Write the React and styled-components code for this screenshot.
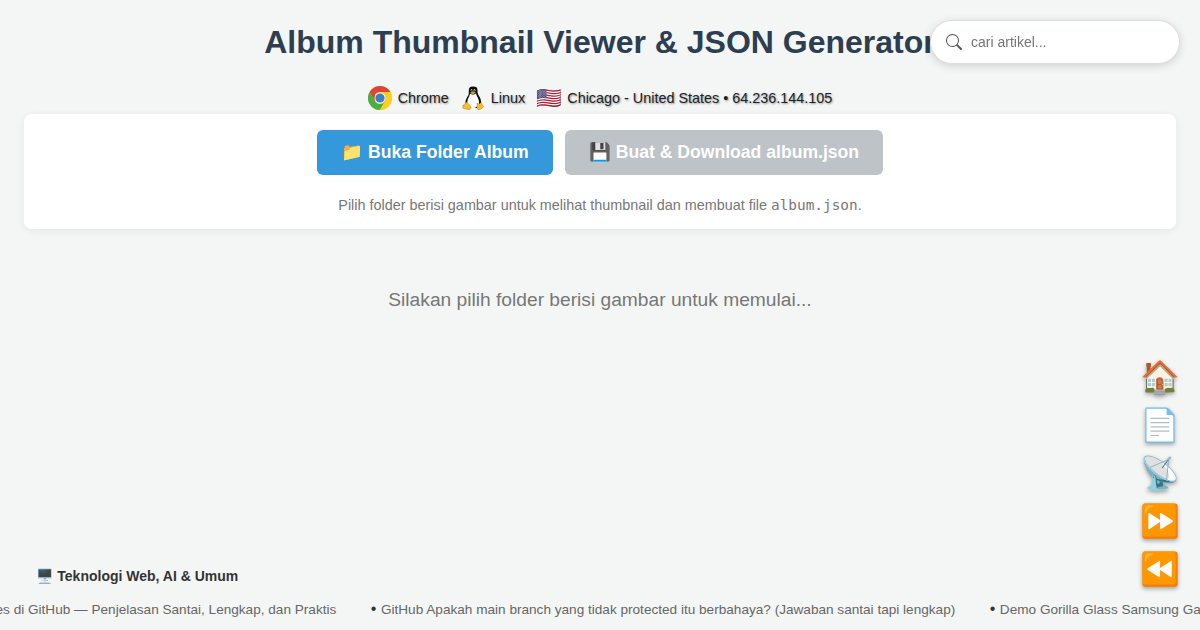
import React from 'react';
import styled, { createGlobalStyle } from 'styled-components';

const Global = createGlobalStyle`
  *, *::before, *::after { box-sizing: border-box; }
  body {
    margin: 0;
    background: #f4f6f6;
    color: #333;
    font-family: "Liberation Sans", "Noto Color Emoji", sans-serif;
    overflow: hidden;
  }
`;

const Page = styled.div`
  height: 630px;
  display: flex;
  flex-direction: column;
  padding-top: 24px;
  overflow: hidden;
`;

const Title = styled.h1`
  margin: 0;
  font-size: 32px;
  line-height: 36px;
  font-weight: 700;
  text-align: center;
  color: #2c3e50;
`;

const Visitor = styled.div`
  display: flex;
  justify-content: center;
  align-items: center;
  gap: 12px;
  height: 32px;
  margin-top: 22px;
  font-size: 14.4px;
  color: #222;
  text-shadow: 1px 1px 2px rgba(0, 0, 0, 0.4);
`;

const VisitorItem = styled.span`
  display: flex;
  align-items: center;
  gap: 6px;
  white-space: nowrap;
`;

const Flag = styled.span`
  font-size: 20.5px;
  line-height: 28px;
  width: 25px;
  margin-left: -1px;
  text-shadow: none;
`;

const Card = styled.section`
  margin: 0 24px;
  height: 115px;
  padding: 16px;
  background: #fff;
  border-radius: 8px;
  box-shadow: 0 2px 8px rgba(0, 0, 0, 0.06);
  text-align: center;
`;

const Actions = styled.div`
  display: flex;
  justify-content: center;
  gap: 12px;
`;

const Button = styled.button`
  width: ${(p) => p.$width}px;
  height: 45px;
  padding: 0;
  border: 0;
  border-radius: 6px;
  background: ${(p) => (p.$muted ? '#bdc3c7' : '#3498db')};
  color: #fff;
  font: 700 17.6px "Liberation Sans", "Noto Color Emoji", sans-serif;
  white-space: nowrap;
`;

const Hint = styled.p`
  margin: 21px 0 0;
  font-size: 14.4px;
  line-height: 18px;
  color: #777;

  code { font-family: "DejaVu Sans Mono", monospace; font-size: 14.4px; }
`;

const Empty = styled.p`
  margin: 60px 0 0;
  font-size: 19.2px;
  line-height: 22px;
  text-align: center;
  color: #777;
`;

const Footer = styled.footer`
  margin-top: auto;
  height: 64px;
`;

const Category = styled.div`
  padding-left: 36px;
  font-size: 14px;
  line-height: 20px;
  font-weight: 700;
`;

const Ticker = styled.div`
  display: flex;
  gap: 34.5px;
  margin: 15px 0 0 -4.5px;
  font-size: 13.6px;
  line-height: 18px;
  white-space: nowrap;
  color: #666;
`;

const TickerItem = styled.span`
  display: flex;
  align-items: center;
  gap: 4.5px;
`;

const Bullet = styled.span`
  position: relative;
  top: -1px;
  font-size: 16px;
  color: #333;
`;

const Search = styled.label`
  position: fixed;
  top: 20px;
  right: 20px;
  width: 250px;
  height: 44px;
  display: flex;
  align-items: center;
  gap: 9px;
  padding: 0 15px;
  border: 1px solid #ddd;
  border-radius: 22px;
  background: #fff;
  box-shadow: 0 2px 8px rgba(0, 0, 0, 0.15);

  svg { flex: none; }
`;

const Input = styled.input`
  flex: 1;
  min-width: 0;
  border: 0;
  outline: 0;
  padding: 0;
  background: transparent;
  font: 14px "Liberation Sans", sans-serif;

  &::placeholder { color: #757575; }
`;

const Dock = styled.nav`
  position: fixed;
  right: 20px;
  top: 353px;
  display: flex;
  flex-direction: column;
`;

const DockLink = styled.a`
  display: flex;
  justify-content: center;
  align-items: center;
  width: 40px;
  height: 48px;
  font-size: 32px;
  line-height: 37px;
  filter: drop-shadow(0 2px 2px rgba(0, 0, 0, 0.35));
`;

function ChromeLogo() {
  return (
    <svg width="24" height="24" viewBox="0 0 48 48">
      <circle cx="24" cy="24" r="24" fill="#fbd01c" />
      <path d="M24 24 13.6 30 3.2 12A24 24 0 0 1 44.8 12H24a12 12 0 0 0-10.4 6Z" fill="#dc4437" />
      <path d="M3.2 12A24 24 0 0 0 24 48L34.4 30A12 12 0 0 1 13.6 30Z" fill="#4aae48" />
      <path d="M44.8 12A24 24 0 0 1 24 48L34.4 30A12 12 0 0 0 34.4 18L24 12Z" fill="#fbd01c" />
      <circle cx="24" cy="24" r="11" fill="#f3f3f3" />
      <circle cx="24" cy="24" r="9.2" fill="#3d7fc0" />
    </svg>
  );
}

function TuxLogo() {
  return (
    <svg width="24" height="24" viewBox="0 0 48 48">
      <path d="M24 1c-6 0-8.5 3-8.5 8 0 6 .5 8-2.5 12-3 5-5 10-4 16l6 7h18l7-8c1-6-1-12-4-16-3-5-3-7-3-12 0-5-3-7-9-7Z" fill="#0b0b0b" />
      <path d="M18 15c3 3 8 3 12 0 1 5 6 10 6 17s-4 12-12 12-12-5-11.500-12c.5-7 5-12 5.500-17Z" fill="#fff" />
      <ellipse cx="21" cy="8.500" rx="1.8" ry="2.3" fill="#bbb" />
      <ellipse cx="27" cy="8.500" rx="2" ry="2.4" fill="#bbb" />
      <circle cx="21.4" cy="9" r="1" fill="#111" />
      <circle cx="26.6" cy="9" r="1" fill="#111" />
      <path d="m18.500 13 5-2.500 6 2.500-5 3.500c-3 0-4-1-6-3.500Z" fill="#d9a52a" />
      <path d="m9 32 4 1 7 9c0 4-3 6-6 5L5 45c-3-1-1-4-1-7l4-1Z" fill="#f3c02b" stroke="#6b4b00" strokeWidth=".6" />
      <path d="M32 34c2 3 6 2 8-1l2 4 3 4c0 2-4 4-7 6-3 1-6 0-6-3Z" fill="#f3c02b" stroke="#6b4b00" strokeWidth=".6" />
    </svg>
  );
}

function SearchIcon() {
  return (
    <svg width="16" height="16" viewBox="0 0 16 16" fill="#555">
      <path d="M11.742 10.344a6.5 6.5 0 1 0-1.397 1.398h-.001q.044.06.098.115l3.85 3.85a1 1 0 0 0 1.415-1.414l-3.85-3.85a1 1 0 0 0-.115-.1zM12 6.5a5.5 5.5 0 1 1-11 0 5.5 5.5 0 0 1 11 0" />
    </svg>
  );
}

export default function App() {
  return (
    <>
      <Global />
      <Page>
        <Title>Album Thumbnail Viewer &amp; JSON Generator</Title>
        <Visitor>
          <VisitorItem><ChromeLogo />Chrome</VisitorItem>
          <VisitorItem><TuxLogo />Linux</VisitorItem>
          <VisitorItem><Flag>🇺🇸</Flag>Chicago - United States • 64.236.144.105</VisitorItem>
        </Visitor>
        <Card>
          <Actions>
            <Button $width={236}>📁 Buka Folder Album</Button>
            <Button $width={318} $muted>💾 Buat &amp; Download album.json</Button>
          </Actions>
          <Hint>Pilih folder berisi gambar untuk melihat thumbnail dan membuat file <code>album.json</code>.</Hint>
        </Card>
        <Empty>Silakan pilih folder berisi gambar untuk memulai...</Empty>
        <Footer>
          <Category>🖥️ Teknologi Web, AI &amp; Umum</Category>
          <Ticker>
            <TickerItem>es di GitHub — Penjelasan Santai, Lengkap, dan Praktis</TickerItem>
            <TickerItem><Bullet>•</Bullet>GitHub Apakah main branch yang tidak protected itu berbahaya? (Jawaban santai tapi lengkap)</TickerItem>
            <TickerItem><Bullet>•</Bullet>Demo Gorilla Glass Samsung Galaxy</TickerItem>
          </Ticker>
        </Footer>
      </Page>
      <Search>
        <SearchIcon />
        <Input placeholder="cari artikel..." />
      </Search>
      <Dock>
        {['🏠', '📄', '📡', '⏩', '⏪'].map((icon) => (
          <DockLink key={icon}>{icon}</DockLink>
        ))}
      </Dock>
    </>
  );
}
